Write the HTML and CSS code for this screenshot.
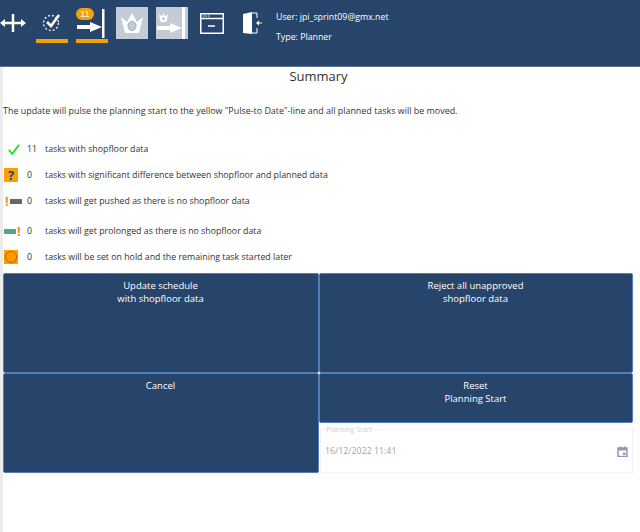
FILE: index.html
```html
<!DOCTYPE html>
<html lang="en">
<head>
<meta charset="utf-8">
<title>Summary</title>
<link rel="stylesheet" href="styles.css">
</head>
<body>
<header class="topbar">
  <button class="tool tool-move" aria-label="Move">
    <svg width="26" height="20" viewBox="0 0 26 20"><path d="M13 1v18M3 10h20" stroke="#fff" stroke-width="2.500" fill="none"/><path d="M0 10l5-4v8zM26 10l-5-4v8z" fill="#fff"/></svg>
  </button>
  <button class="tool tool-check" aria-label="Approve">
    <svg width="20" height="20" viewBox="0 0 20 20"><circle cx="9" cy="11" r="7.500" fill="none" stroke="#dfe5ec" stroke-width="1.500" stroke-dasharray="2 2"/><path d="M5 10l4 4 8-11" fill="none" stroke="#fff" stroke-width="2.600"/></svg>
  </button>
  <button class="tool tool-pulse" aria-label="Pulse to date">
    <span class="badge">11</span>
    <svg width="32" height="32" viewBox="0 0 32 32"><path d="M26 2h2.500v29H26z" fill="#fff"/><path d="M1 18h13v-3l12 5-12 5v-3H1z" fill="#fff"/></svg>
  </button>
  <button class="tool tile tile-crown" aria-label="Crown">
    <svg width="24" height="22" viewBox="0 0 24 22"><path d="M1 5l6 5 5-9 5 9 6-5-4 16H5z" fill="#fff"/><ellipse cx="12" cy="14" rx="4" ry="4.500" fill="#c3cbd6" stroke="#9fabba"/></svg>
  </button>
  <button class="tool tile tile-arrow" aria-label="Crown pulse">
    <svg width="32" height="32" viewBox="0 0 32 32"><path d="M26 0h3v32h-3z" fill="#fff"/><path d="M1 19h13v-3l12 5-12 5v-3H1z" fill="#fff"/><path d="M3 7l3 2.500L7.500 6 9 9.500 12 7l-1.500 8h-6z" fill="#fff"/><circle cx="7.500" cy="11.500" r="1.500" fill="#c3cbd6"/></svg>
  </button>
  <button class="tool tool-window" aria-label="Window">
    <svg width="24" height="21" viewBox="0 0 24 21"><rect x=".75" y=".75" width="22.500" height="19.500" fill="none" stroke="#fff" stroke-width="1.500"/><path d="M1 5.500h22M8 13h7" stroke="#fff" stroke-width="1.300"/><path d="M3 3h1.500M5.500 3H7M8 3h1.500" stroke="#fff"/></svg>
  </button>
  <button class="tool tool-exit" aria-label="Log out">
    <svg width="22" height="24" viewBox="0 0 22 24"><path d="M1 3l9-2v22l-9-1z" fill="#fff"/><path d="M10 2h5v5M15 17v5h-5" fill="none" stroke="#fff"/><path d="M14 12l3-2.500v2h3v1h-3v2z" fill="#fff"/></svg>
  </button>
  <div class="user">
    <p>User: jpi_sprint09@gmx.net</p>
    <p>Type: Planner</p>
  </div>
</header>
<main class="page">
  <h1 class="title">Summary</h1>
  <p class="intro">The update will pulse the planning start to the yellow "Pulse-to Date"-line and all planned tasks will be moved.</p>
  <ul class="rows">
    <li class="row row-a">
      <span class="ico"><svg width="12" height="13" viewBox="0 0 14 13"><path d="M1 7l4 4.500L13 1" fill="none" stroke="#22dd22" stroke-width="2.200"/></svg></span>
      <span class="num">11</span><span>tasks with shopfloor data</span>
    </li>
    <li class="row row-b">
      <span class="ico"><span class="sq q">?</span></span>
      <span class="num">0</span><span>tasks with significant difference between shopfloor and planned data</span>
    </li>
    <li class="row row-c">
      <span class="ico ico-bar"><span class="ex">!</span><span class="bar bar-grey"></span></span>
      <span class="num">0</span><span>tasks will get pushed as there is no shopfloor data</span>
    </li>
    <li class="row row-d">
      <span class="ico ico-bar"><span class="bar bar-green"></span><span class="ex">!</span></span>
      <span class="num">0</span><span>tasks will get prolonged as there is no shopfloor data</span>
    </li>
    <li class="row row-e">
      <span class="ico"><span class="sq"><span class="ring"></span></span></span>
      <span class="num">0</span><span>tasks will be set on hold and the remaining task started later</span>
    </li>
  </ul>
  <section class="actions">
    <button class="act">Update schedule<br>with shopfloor data</button>
    <button class="act">Reject all unapproved<br>shopfloor data</button>
    <button class="act act-cancel">Cancel</button>
    <button class="act">Reset<br>Planning Start</button>
    <div class="field">
      <span class="legend">Planning Start</span>
      <span class="value">16/12/2022 11:41</span>
      <svg class="cal" width="11" height="11" viewBox="0 0 11 11"><path d="M1 2h9v8.500H1z" fill="none" stroke="#8d9bb0" stroke-width="1.500"/><path d="M1 2h9v2.500H1zM2.500 .5h1.500V2H2.500zM7 .5h1.500V2H7zM6 6.500h2.500V9H6z" fill="#8d9bb0"/></svg>
    </div>
  </section>
</main>
</body>
</html>
```
FILE: styles.css
```css
* { box-sizing: border-box; }
html, body { margin: 0; height: 100%; }
body {
  background: #fff;
  font-family: "Open Sans", "Noto Sans", sans-serif;
  color: #333;
  overflow: hidden;
}
.topbar {
  height: 67px;
  background: #27456a;
  border-bottom: 1px solid #5d7491;
  display: flex;
  align-items: flex-start;
  color: #fff;
}
.tool {
  border: 0;
  padding: 0;
  background: none;
  display: flex;
  align-items: center;
  justify-content: center;
  position: relative;
  flex: none;
  height: 32px;
  margin-top: 7px;
}
.tool-move { width: 26px; height: 20px; margin-top: 13px; }
.tool-check { width: 32px; margin-left: 10px; height: 36px; padding-bottom: 2px; border-bottom: 4px solid #f5a300; }
.tool-pulse { width: 32px; margin-left: 8px; height: 36px; border-bottom: 4px solid #f5a300; }
.tile { width: 32px; background: #c3cbd6; }
.tile-crown { margin-left: 8px; }
.tile-arrow { margin-left: 8px; }
.tool-window { width: 32px; margin-left: 8px; }
.tool-exit { width: 22px; margin-left: 14px; }
.badge {
  position: absolute;
  left: 0;
  top: 1px;
  width: 18px;
  height: 12px;
  border-radius: 6px;
  background: #f5a300;
  color: #fff;
  font-size: 9px;
  line-height: 12px;
  text-align: center;
}
.user { margin-left: 12px; padding-top: 11px; font-size: 8.800px; }
.user p { margin: 0 0 8px; line-height: 12px; }
.page {
  height: 465px;
  border-left: 3px solid #ececec;
}
.title {
  margin: 0;
  text-align: center;
  font-size: 13px;
  font-weight: 400;
  line-height: 19px;
  color: #333;
  padding-right: 6px;
}
.intro {
  margin: 19px 0 0;
  font-size: 8.930px;
  line-height: 12px;
}
.rows { list-style: none; margin: 0; padding: 0; font-size: 8.800px; }
.row { display: flex; align-items: center; height: 14px; }
.row-a { margin-top: 25px; }
.row-b { margin-top: 12px; }
.row-c { margin-top: 12px; }
.row-d { margin-top: 16px; }
.row-e { margin-top: 12px; }
.ico { width: 24px; padding-left: 1px; display: flex; align-items: center; flex: none; }
.row-a .ico { padding-left: 5px; }
.num { width: 18px; flex: none; }
.sq {
  width: 14px;
  height: 14px;
  background: #fca000;
  display: flex;
  align-items: center;
  justify-content: center;
}
.q { color: #27456a; font-weight: 700; font-size: 13px; line-height: 14px; }
.ring { width: 12px; height: 12px; border-radius: 50%; border: 1.500px solid #e8480c; }
.ico-bar { gap: 1px; }
.row-c .ico { padding-left: 2px; }
.bar { width: 12px; height: 5px; }
.bar-grey { background: #666; }
.bar-green { background: #4fa97f; }
.ex { color: #f5891f; font-size: 13px; font-weight: 700; line-height: 14px; width: 4px; }
.actions {
  margin-top: 9px;
  display: grid;
  grid-template-columns: 316px 314px;
  grid-template-rows: 100px 50px 50px;
  width: 630px;
}
.act {
  background: #27456a;
  color: #fff;
  border: 1px solid #4f7fb8;
  border-radius: 2px;
  font: inherit;
  font-size: 9.500px;
  line-height: 13px;
  padding: 5px 1px 0 0;
  display: flex;
  justify-content: center;
  align-items: flex-start;
  text-align: center;
}
.act-cancel { grid-row: 2 / span 2; }
.field {
  position: relative;
  margin-left: 1px;
  border: 1px dotted #e8e8e8;
  margin-top: 6px;
  display: flex;
  align-items: center;
  justify-content: space-between;
  padding: 0 4px 0 4px;
}
.legend {
  position: absolute;
  left: 4px;
  top: -5px;
  padding: 0 1px;
  background: #fff;
  font-size: 7px;
  line-height: 9px;
  color: #c3d0e2;
}
.value { font-size: 8.800px; color: #a4a4a4; }
```
